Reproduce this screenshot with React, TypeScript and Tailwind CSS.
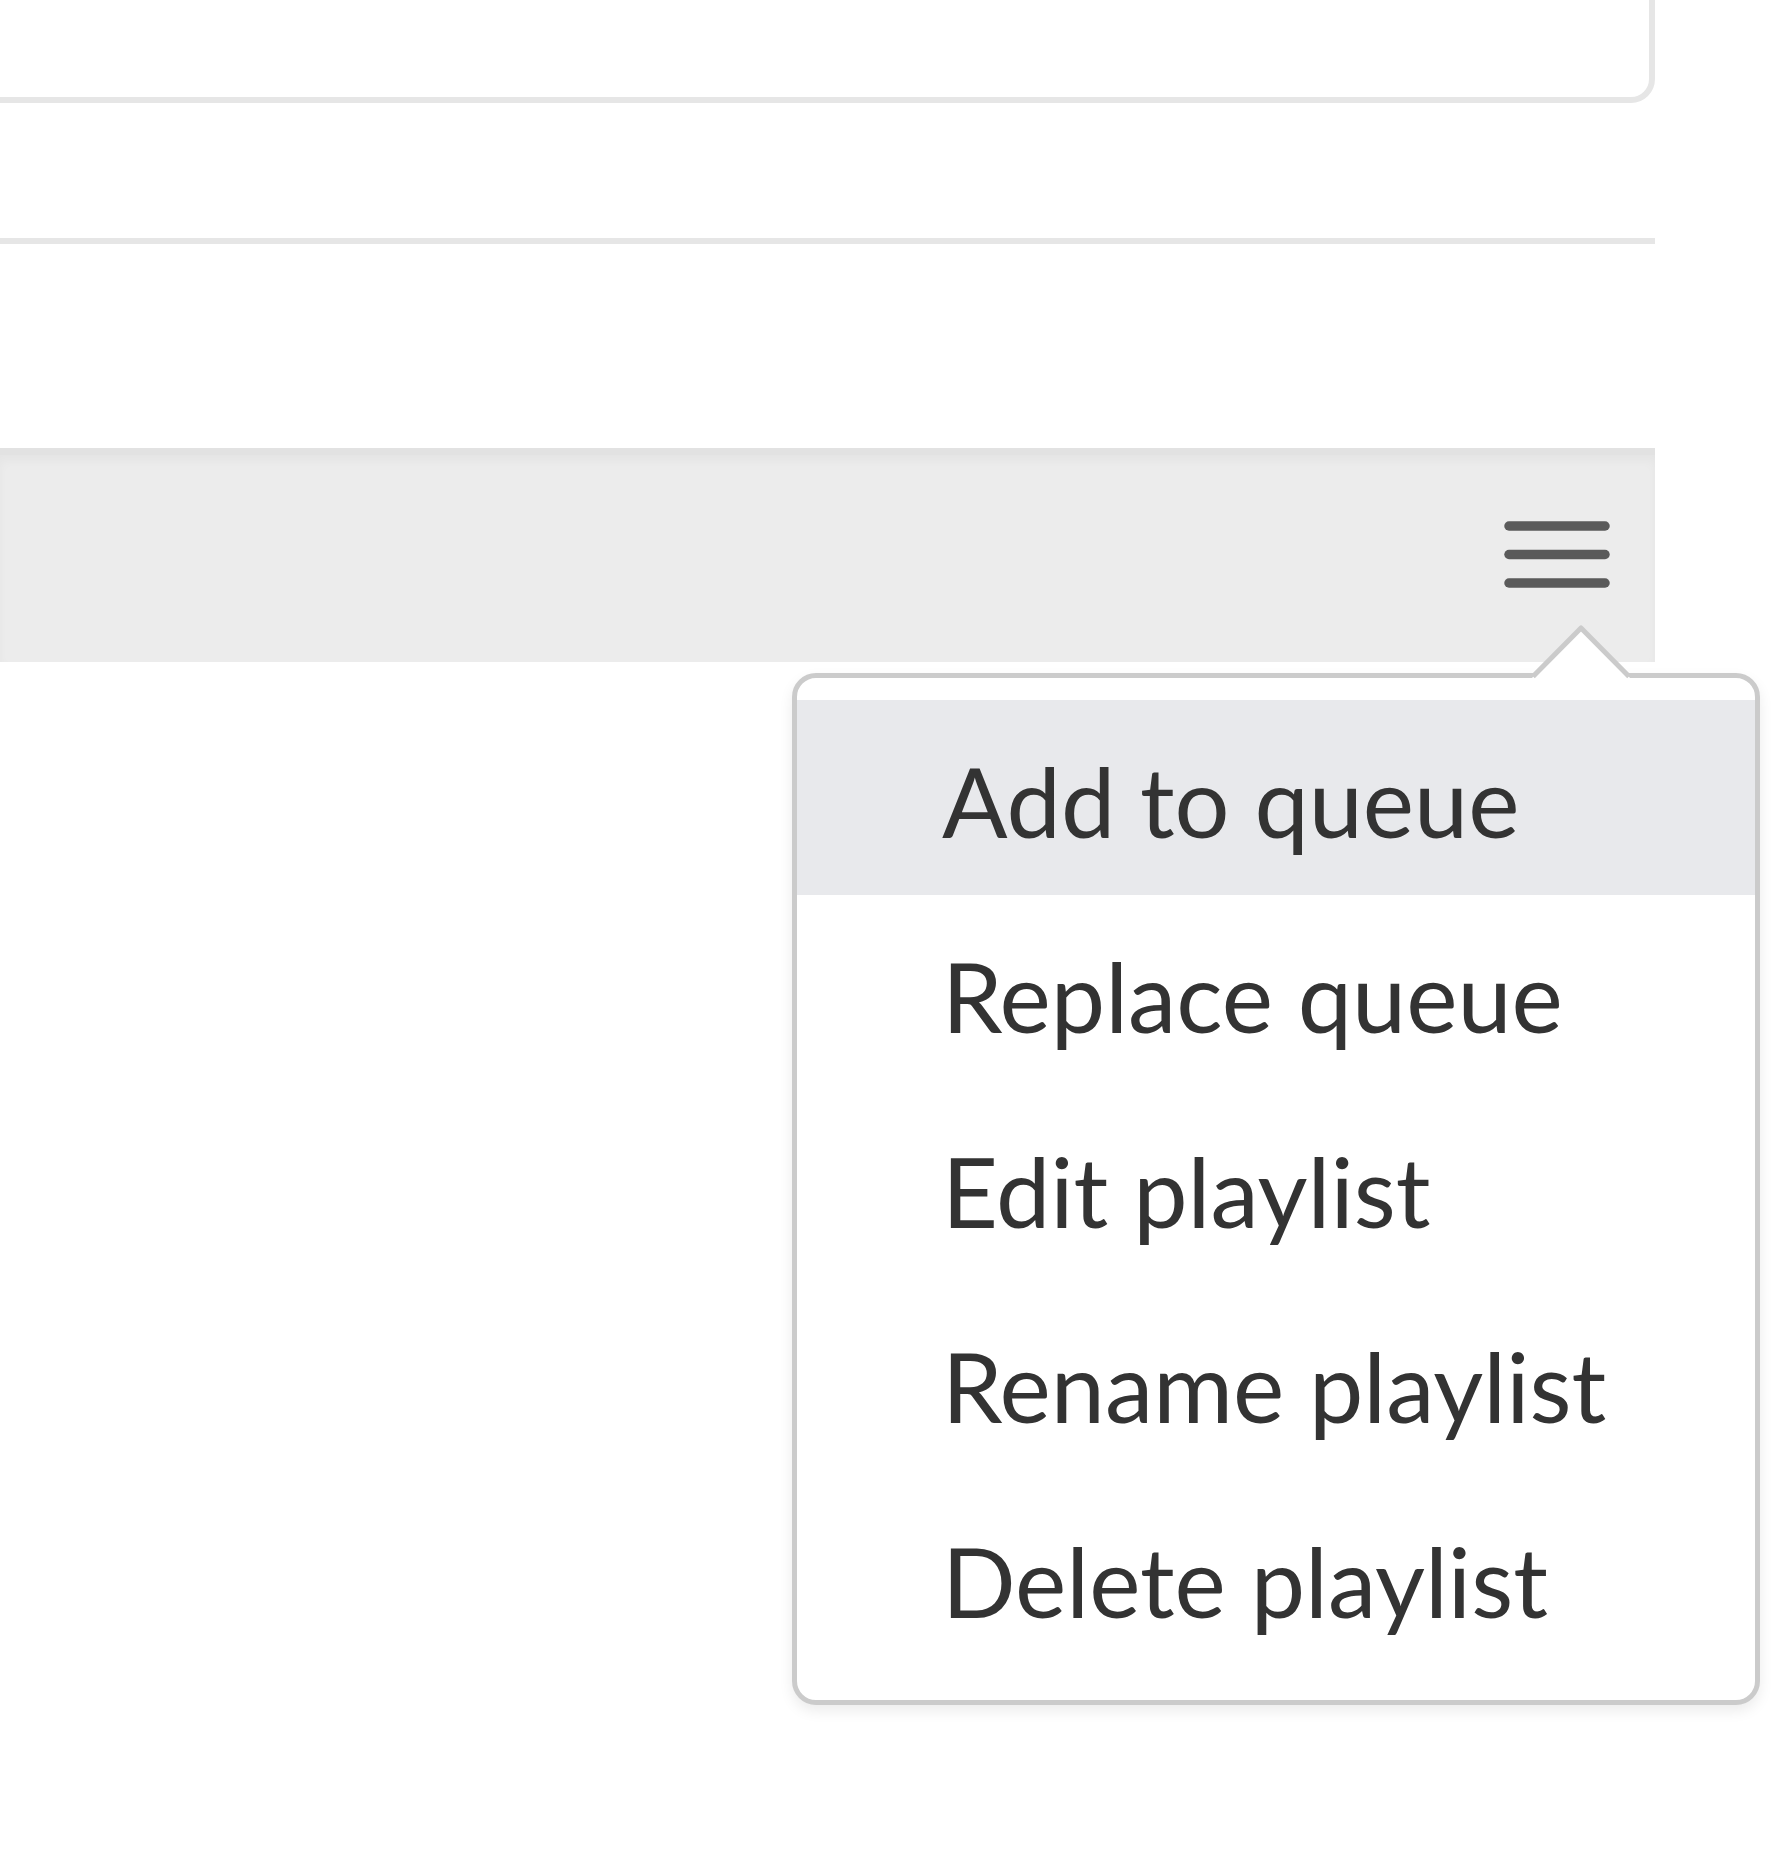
import React from 'react';

const items = ['Add to queue', 'Replace queue', 'Edit playlist', 'Rename playlist', 'Delete playlist'];

const MenuIcon: React.FC = () => (
  <svg width="106" height="76" viewBox="0 0 106 76" fill="none">
    <g stroke="#5a5a5a" strokeWidth="9.5" strokeLinecap="round">
      <line x1="5" y1="9" x2="101" y2="9" />
      <line x1="5" y1="37.5" x2="101" y2="37.5" />
      <line x1="5" y1="66" x2="101" y2="66" />
    </g>
  </svg>
);

const App: React.FC = () => {
  const active = 0;

  return (
    <div className="w-[1772px] h-[1850px] bg-white overflow-hidden" style={{ fontFamily: 'Lato, "Open Sans", sans-serif' }}>
      {/* card above, cut off by the viewport */}
      <div className="-mt-[40px] -ml-[40px] w-[1695px] h-[143px] border-[6px] border-[#e6e6e6] rounded-[24px] bg-white" />

      <div className="mt-[135px] w-[1655px] h-[6px] bg-[#e6e6e6]" />

      {/* playlist header bar */}
      <div className="relative mt-[204px] w-[1655px] h-[214px] bg-[#ececec] border-t-[7px] border-[#e2e2e2] shadow-[inset_0_6px_10px_rgba(0,0,0,0.03)] flex items-center justify-end pr-[45px]">
        <div className="-mt-[7px]">
          <MenuIcon />
        </div>

        {/* dropdown */}
        <div className="absolute top-[218px] left-[792px] z-10">
          <svg className="absolute left-[735px] -top-[55px]" width="110" height="64" viewBox="0 0 110 64">
            <polygon points="3,62 54,10 105,62" fill="#ffffff" />
            <polyline points="6,58.5 54,10 102,58.5" fill="none" stroke="#cbcbcb" strokeWidth="5" strokeLinejoin="round" />
          </svg>
          <div className="w-[968px] bg-white border-[5px] border-[#cbcbcb] rounded-[24px] pt-[22px] pb-[25px] shadow-[0_6px_14px_rgba(0,0,0,0.08)]">
            {items.map((label, i) => (
              <div
                key={label}
                className={`h-[195px] pl-[145px] pt-[3px] leading-[195px] text-[97px] text-[#333333] whitespace-nowrap ${
                  i === active ? 'bg-[#e8e9ec]' : ''
                }`}
              >
                {label}
              </div>
            ))}
          </div>
        </div>
      </div>
    </div>
  );
};

export default App;
